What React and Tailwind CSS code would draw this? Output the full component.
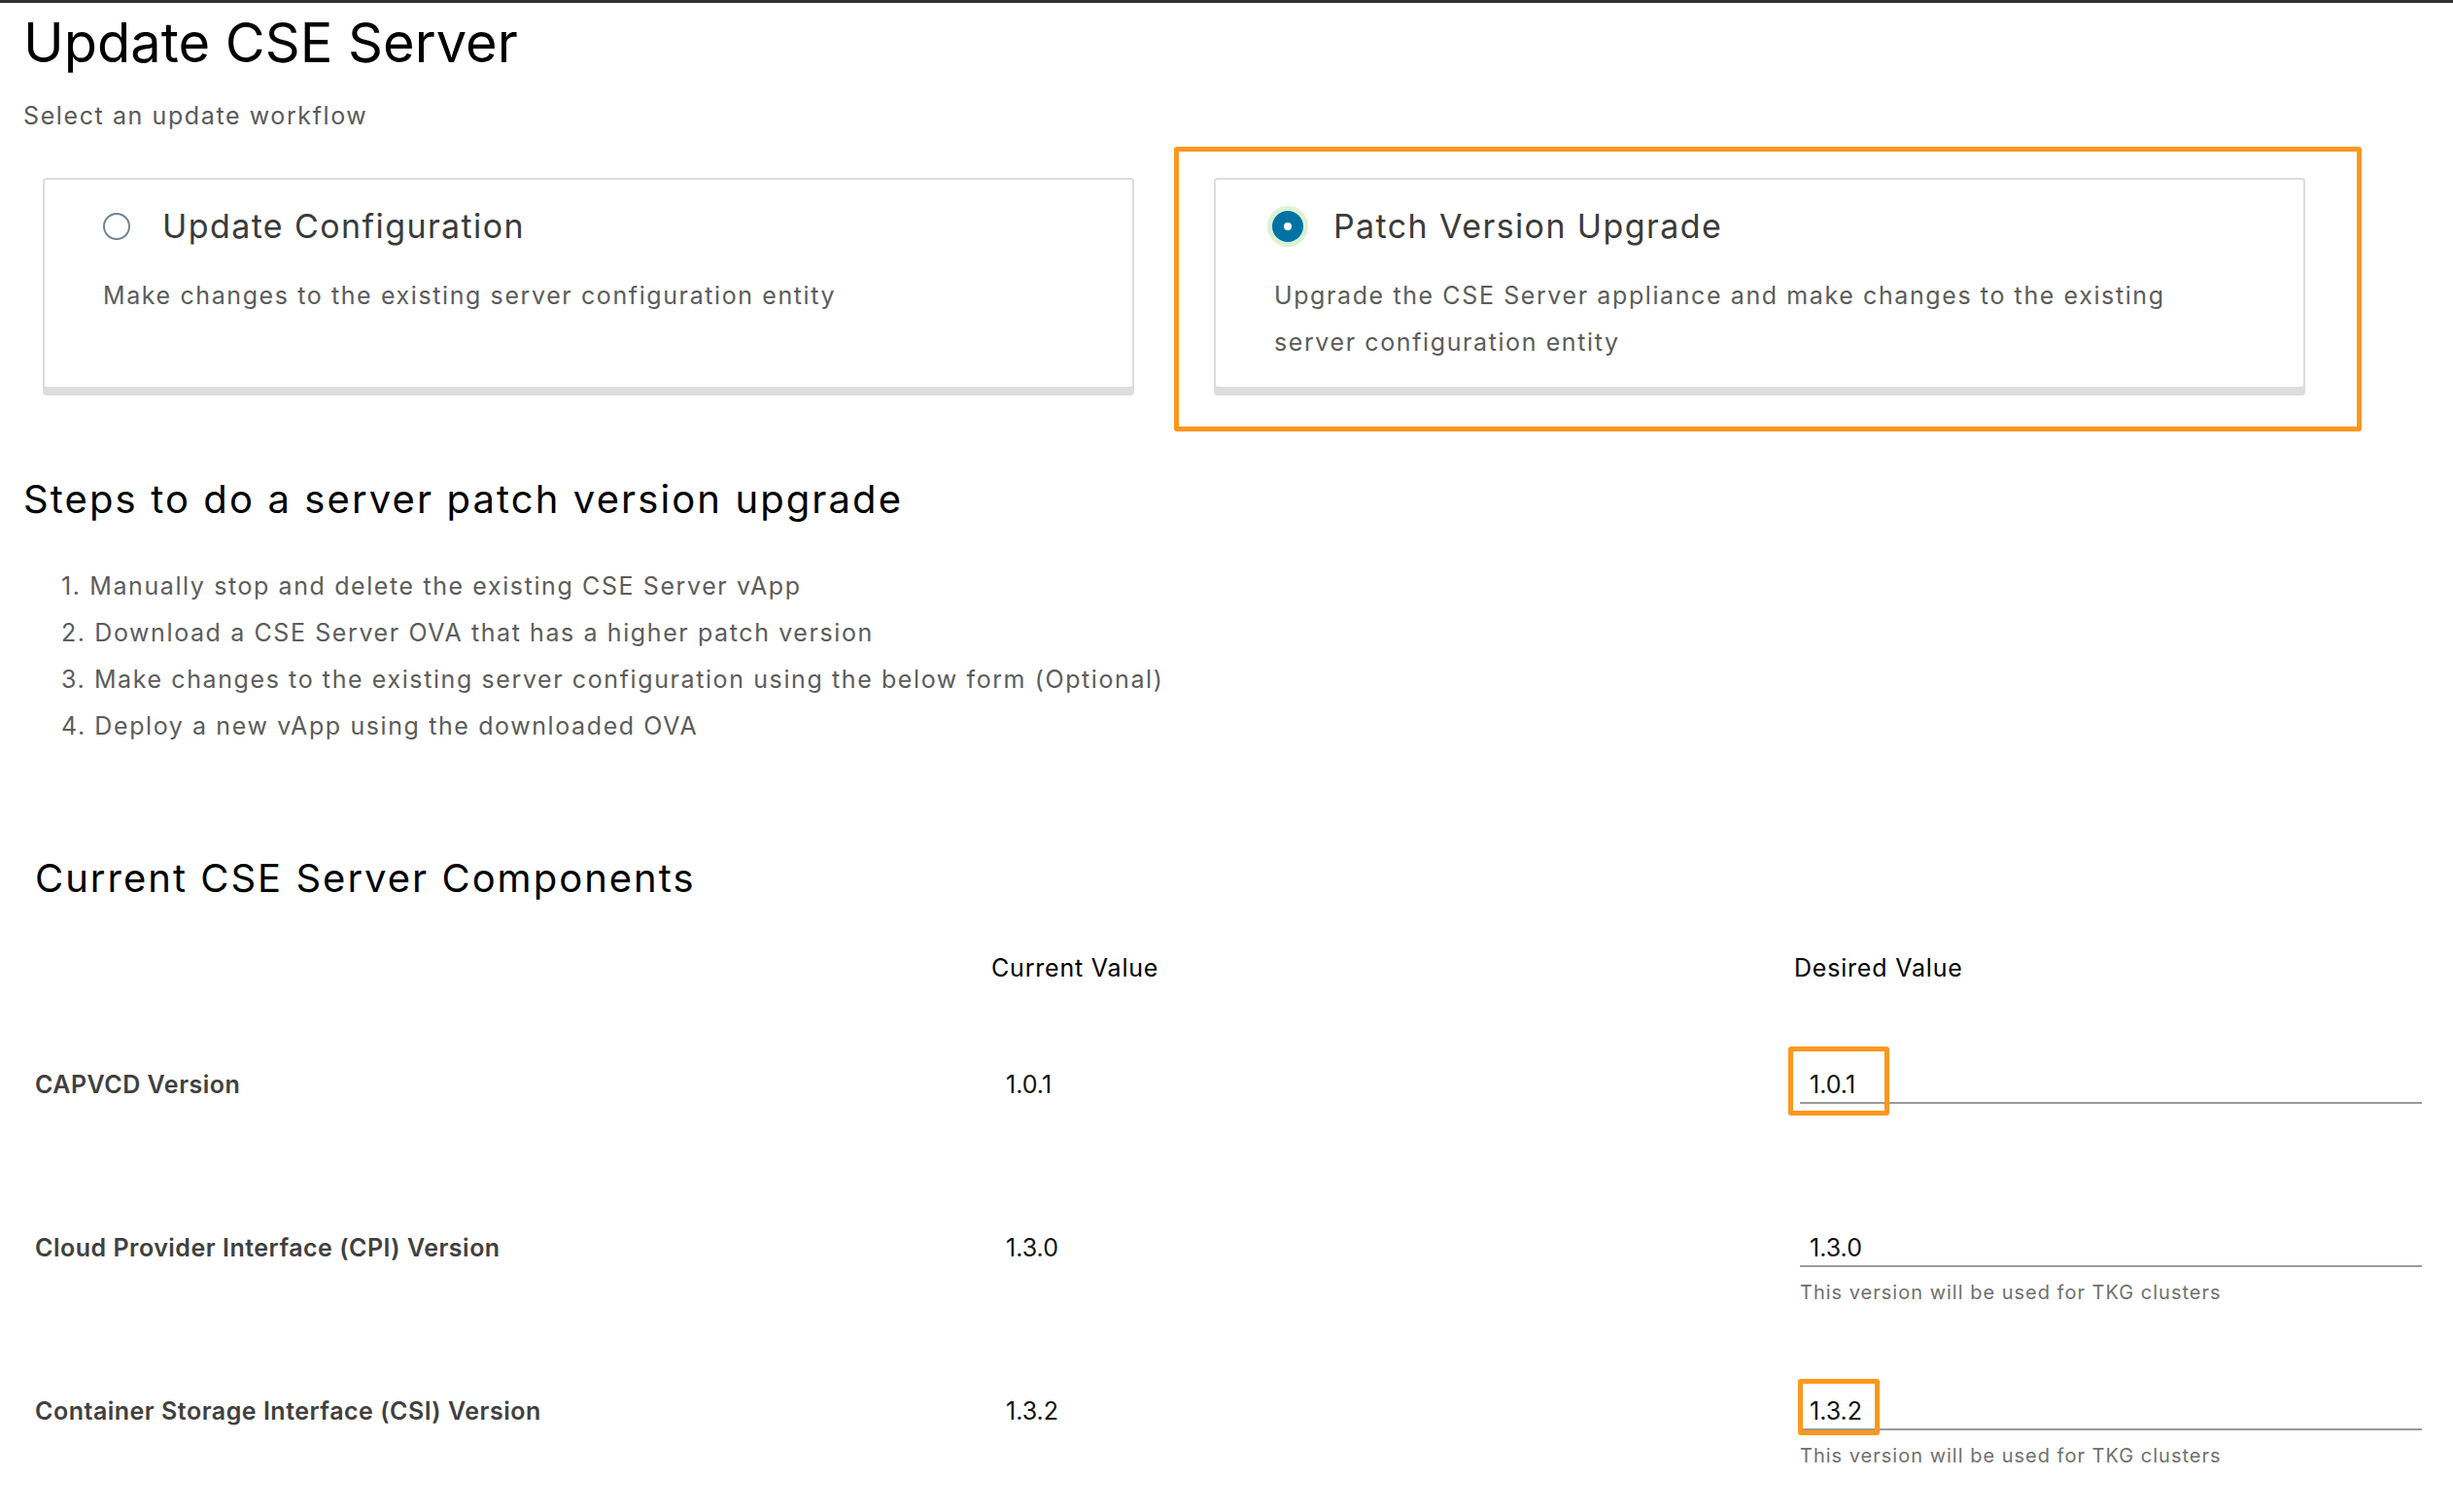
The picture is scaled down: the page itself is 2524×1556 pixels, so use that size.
import React from "react";

function Radio({ checked }) {
  if (checked) {
    return (
      <span className="flex h-[28px] w-[28px] shrink-0 items-center justify-center rounded-full bg-[#0072a3] shadow-[0_0_0_2px_#0072a3,0_0_0_7px_#dcf2d4]">
        <span className="h-[8px] w-[8px] rounded-full bg-white" />
      </span>
    );
  }
  return <span className="h-[28px] w-[28px] shrink-0 rounded-full border-2 border-[#6f8591] bg-white" />;
}

function Card({ checked, title, children }) {
  return (
    <div className="rounded-[4px] border-2 border-[#dddddd] bg-white pb-[22px] pl-[60px] pr-[40px] pt-[26px] shadow-[0_7px_0_0_#dddddd]">
      <div className="flex h-[44px] items-center gap-[33px]">
        <Radio checked={checked} />
        <span className="text-[34px] leading-[44px] tracking-[1.4px] text-[#3b3b3b]">{title}</span>
      </div>
      <p className="mt-[25px] text-[25px] leading-[48px] tracking-[1.6px] text-[#5c5c5c]">{children}</p>
    </div>
  );
}

function Row({ label, value, desired, helper, box }) {
  return (
    <div className="grid h-[168px] grid-cols-[984px_826px_646px] items-start">
      <div className="text-[25px] font-semibold leading-[36px] tracking-[0.5px] text-[#404040]">{label}</div>
      <div className="pl-[15px] text-[25px] leading-[36px] text-[#111111]">{value}</div>
      <div className="pl-[6px]">
        <div className="relative w-[640px]">
          <div className="h-[38px] border-b-2 border-[#9a9a9a] pl-[10px] text-[25px] leading-[36px] text-[#111111]">
            {desired}
          </div>
          {box === 1 && (
            <div className="pointer-events-none absolute left-[-12px] top-[-21px] h-[71px] w-[104px] rounded-[3px] border-[5px] border-[#fd971f]" />
          )}
          {box === 3 && (
            <div className="pointer-events-none absolute left-[-2px] top-[-15px] h-[58px] w-[84px] rounded-[3px] border-[5px] border-[#fd971f]" />
          )}
        </div>
        {helper && (
          <div className="mt-[12px] text-[20px] leading-[28px] tracking-[1px] text-[#707070]">{helper}</div>
        )}
      </div>
    </div>
  );
}

export default function App() {
  return (
    <div className="h-[1556px] w-full overflow-hidden border-t-[3px] border-[#313131] bg-white font-['Inter',sans-serif]">
      <div className="pl-[24px]">
        <h1 className="mt-[5px] text-[56px] font-normal leading-[72px] text-black">Update CSE Server</h1>
        <p className="mt-[23px] text-[25px] leading-[32px] tracking-[1.6px] text-[#5a5a5a]">Select an update workflow</p>

        <div className="ml-[20px] mt-[48px] grid w-[2328px] grid-cols-2 gap-[82px]">
          <Card checked={false} title="Update Configuration">
            Make changes to the existing server configuration entity
          </Card>
          <div className="relative flex">
            <div className="w-full">
              <Card checked={true} title="Patch Version Upgrade">
                Upgrade the CSE Server appliance and make changes to the existing
                <br />
                server configuration entity
              </Card>
            </div>
            <div className="pointer-events-none absolute bottom-[-44px] left-[-41px] right-[-58px] top-[-32px] rounded-[3px] border-[5px] border-[#fd971f]" />
          </div>
        </div>

        <h2 className="mt-[90px] text-[40px] font-normal leading-[48px] tracking-[2.1px] text-black">
          Steps to do a server patch version upgrade
        </h2>
        <ol className="ml-[39px] mt-[41px] text-[25px] leading-[48px] tracking-[1.6px] text-[#5c5c5c]">
          <li>1. Manually stop and delete the existing CSE Server vApp</li>
          <li>2. Download a CSE Server OVA that has a higher patch version</li>
          <li>3. Make changes to the existing server configuration using the below form (Optional)</li>
          <li>4. Deploy a new vApp using the downloaded OVA</li>
        </ol>

        <div className="ml-[12px]">
          <h2 className="mt-[109px] text-[40px] font-normal leading-[48px] tracking-[2px] text-black">
            Current CSE Server Components
          </h2>
          <div className="mt-[52px] grid grid-cols-[984px_826px_646px] text-[25px] leading-[32px] tracking-[0.8px] text-black">
            <div />
            <div>Current Value</div>
            <div>Desired Value</div>
          </div>
          <div className="mt-[86px]">
            <Row label="CAPVCD Version" value="1.0.1" desired="1.0.1" box={1} />
            <Row
              label="Cloud Provider Interface (CPI) Version"
              value="1.3.0"
              desired="1.3.0"
              helper="This version will be used for TKG clusters"
            />
            <Row
              label="Container Storage Interface (CSI) Version"
              value="1.3.2"
              desired="1.3.2"
              helper="This version will be used for TKG clusters"
              box={3}
            />
          </div>
        </div>
      </div>
    </div>
  );
}
